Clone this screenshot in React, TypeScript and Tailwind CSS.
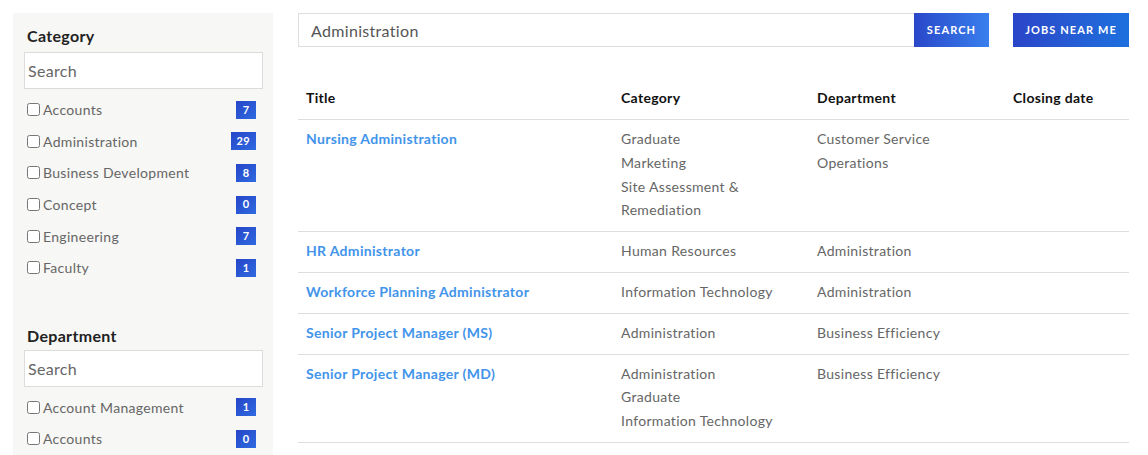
import React from "react";

interface Facet {
  label: string;
  count: number;
}

interface Job {
  title: string;
  categories: string[];
  departments: string[];
}

const categories: Facet[] = [
  { label: "Accounts", count: 7 },
  { label: "Administration", count: 29 },
  { label: "Business Development", count: 8 },
  { label: "Concept", count: 0 },
  { label: "Engineering", count: 7 },
  { label: "Faculty", count: 1 },
];

const departments: Facet[] = [
  { label: "Account Management", count: 1 },
  { label: "Accounts", count: 0 },
];

const jobs: Job[] = [
  {
    title: "Nursing Administration",
    categories: ["Graduate", "Marketing", "Site Assessment &", "Remediation"],
    departments: ["Customer Service", "Operations"],
  },
  { title: "HR Administrator", categories: ["Human Resources"], departments: ["Administration"] },
  { title: "Workforce Planning Administrator", categories: ["Information Technology"], departments: ["Administration"] },
  { title: "Senior Project Manager (MS)", categories: ["Administration"], departments: ["Business Efficiency"] },
  {
    title: "Senior Project Manager (MD)",
    categories: ["Administration", "Graduate", "Information Technology"],
    departments: ["Business Efficiency"],
  },
];

function FacetGroup({ title, items, tight }: { title: string; items: Facet[]; tight?: boolean }) {
  return (
    <div>
      <h3 className="pl-[3px] text-[16px] font-bold leading-6 text-[#222]">{title}</h3>
      <input
        type="text"
        placeholder="Search"
        className={`${tight ? "mt-[2px]" : "mt-[4px]"} block h-[37px] w-full border border-[#dcdcdc] bg-white px-[3px] text-[16px] text-[#555] placeholder:text-[#666] outline-none`}
      />
      <ul className="mt-[5px] pr-[7px] pl-[3px]">
        {items.map((item) => (
          <li key={item.label} className="flex h-[31.6px] items-center justify-between">
            <label className="flex items-center gap-[3px] text-[14px] text-[#666]">
              <input type="checkbox" className="m-0 h-[13px] w-[13px]" />
              {item.label}
            </label>
            <span className="flex h-[18px] min-w-[20px] items-center justify-center bg-gradient-to-br from-[#2745c8] to-[#2f6ae0] px-[6px] text-[11px] font-bold text-white">
              {item.count}
            </span>
          </li>
        ))}
      </ul>
    </div>
  );
}

export default function App() {
  return (
    <div
      className="flex h-[455px] gap-[25px] overflow-hidden bg-white pt-[13px] pl-[13px] tracking-[0.02em]"
      style={{ fontFamily: "Lato, 'Noto Sans', sans-serif" }}
    >
      {/* Filters */}
      <aside className="w-[260px] shrink-0 bg-[#f7f7f5] pt-[11px] pr-[10px] pl-[11px]">
        <FacetGroup title="Category" items={categories} />
        <div className="mt-[40px]">
          <FacetGroup title="Department" items={departments} tight />
        </div>
      </aside>

      {/* Results */}
      <main className="w-[831px] shrink-0">
        <div className="flex h-[34px]">
          <input
            type="text"
            defaultValue="Administration"
            className="h-full w-[616px] border border-r-0 border-[#dedede] px-[12px] text-[16px] text-[#555] outline-none"
          />
          <button className="h-full w-[75px] bg-gradient-to-r from-[#2a47c9] to-[#3a7fee] text-[11px] font-bold tracking-[0.1em] text-white">
            SEARCH
          </button>
          <button className="ml-[24px] h-full w-[116px] bg-gradient-to-r from-[#2a45c8] to-[#1d70de] text-[11px] font-bold tracking-[0.1em] text-white">
            JOBS NEAR ME
          </button>
        </div>

        <table className="mt-[31px] w-full table-fixed border-collapse text-left text-[14px]">
          <colgroup>
            <col className="w-[315px]" />
            <col className="w-[196px]" />
            <col className="w-[196px]" />
            <col />
          </colgroup>
          <thead>
            <tr className="border-b border-[#dedede]">
              <th className="px-[8px] pt-[8px] pb-[9px] font-bold leading-6 text-[#111]">Title</th>
              <th className="px-[8px] pt-[8px] pb-[9px] font-bold leading-6 text-[#111]">Category</th>
              <th className="px-[8px] pt-[8px] pb-[9px] font-bold leading-6 text-[#111]">Department</th>
              <th className="px-[8px] pt-[8px] pb-[9px] font-bold leading-6 text-[#111]">Closing date</th>
            </tr>
          </thead>
          <tbody>
            {jobs.map((job) => (
              <tr key={job.title} className="border-b border-[#dedede] align-top">
                <td className="px-[8px] pt-[7px] pb-[9px] leading-[23.8px]">
                  <a href="#" className="font-bold text-[#4294ea]">
                    {job.title}
                  </a>
                </td>
                <td className="px-[8px] pt-[7px] pb-[9px] leading-[23.8px] text-[#666]">
                  {job.categories.map((c) => (
                    <div key={c}>{c}</div>
                  ))}
                </td>
                <td className="px-[8px] pt-[7px] pb-[9px] leading-[23.8px] text-[#666]">
                  {job.departments.map((d) => (
                    <div key={d}>{d}</div>
                  ))}
                </td>
                <td className="px-[8px] pt-[7px] pb-[9px] leading-[23.8px]" />
              </tr>
            ))}
          </tbody>
        </table>
      </main>
    </div>
  );
}
